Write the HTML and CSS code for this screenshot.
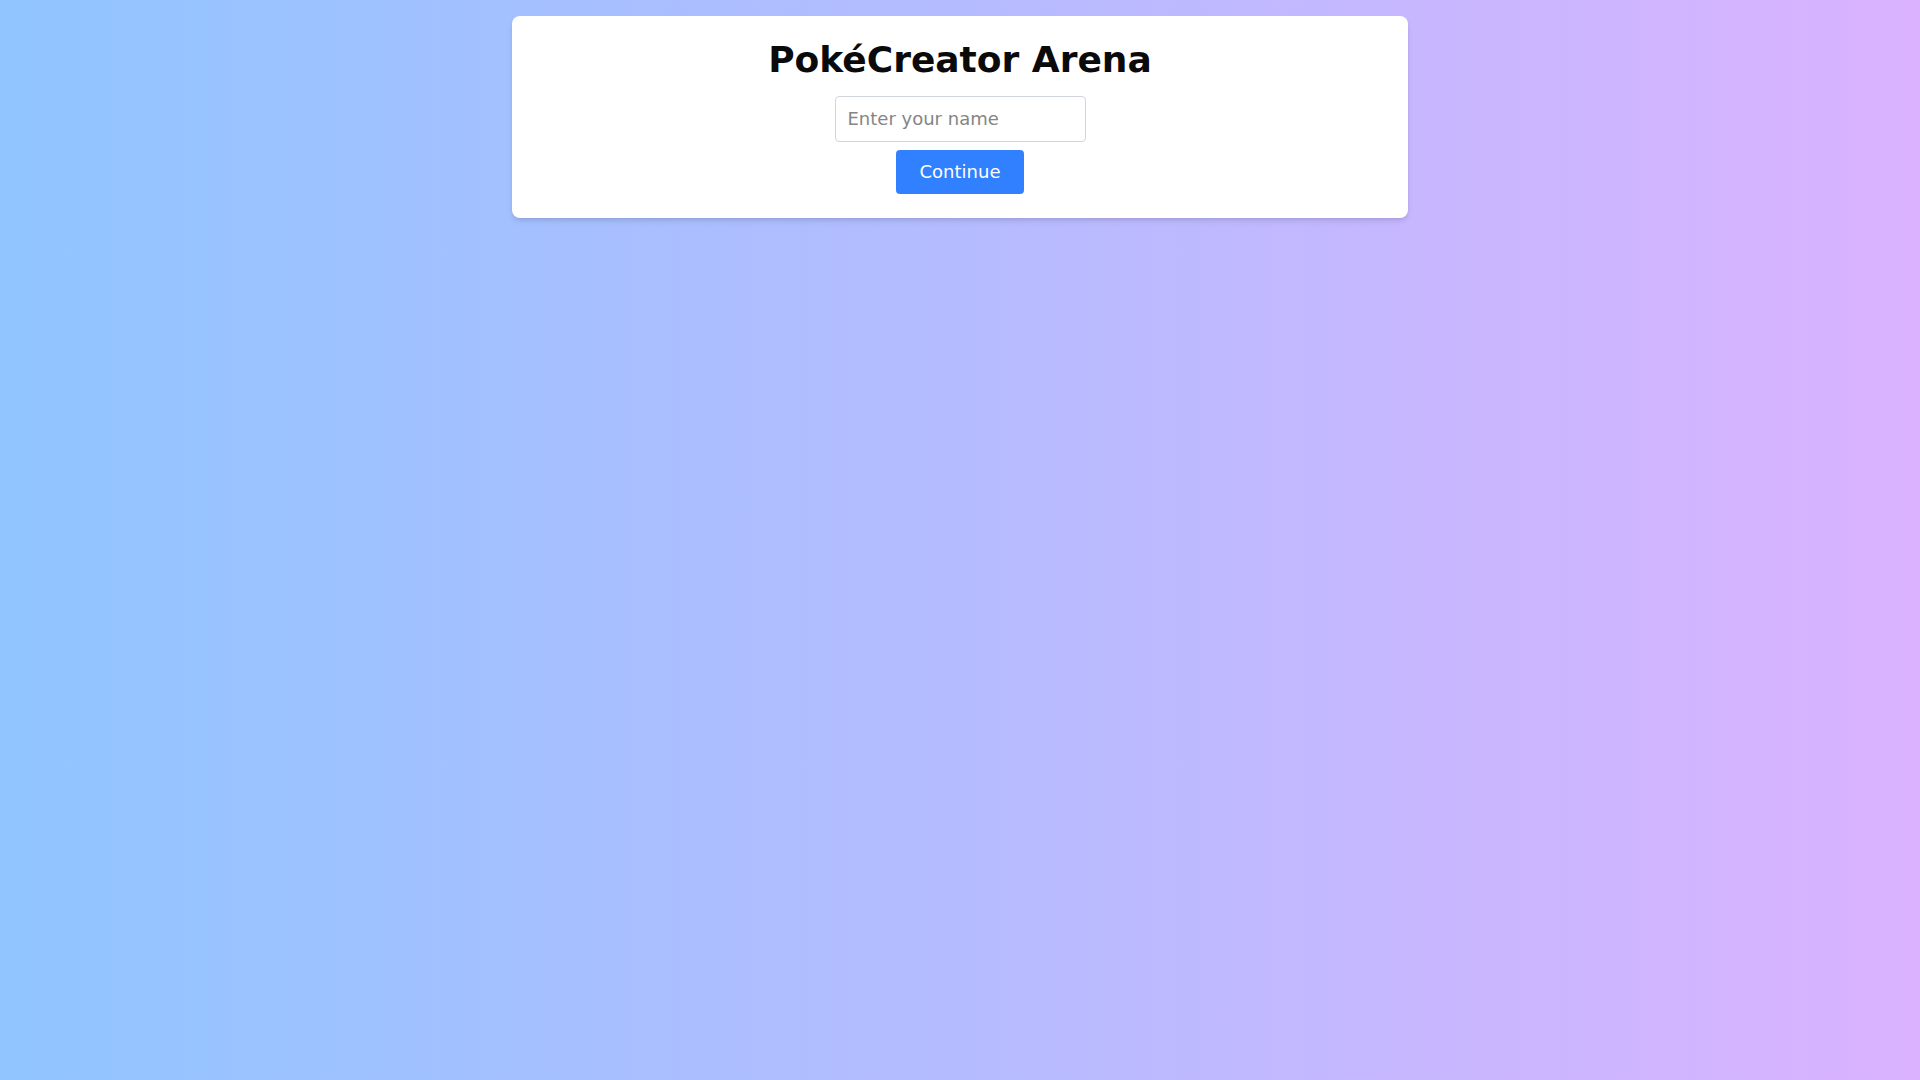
FILE: index.html
```html
<!DOCTYPE html>
<html>
<head>
  <title>PokéCreator Arena</title>
  <link rel="stylesheet" href="styles.css">
</head>
<body>
  <div class="card">
    <h1>PokéCreator Arena</h1>
    <form class="name-form">
      <input type="text" id="name-input" placeholder="Enter your name">
      <button type="submit">Continue</button>
    </form>
  </div>
</body>
</html>
```

FILE: styles.css
```css
html, body {
  margin: 0;
  padding: 0;
}
body {
  font-family: "DejaVu Sans", sans-serif;
  min-height: 100vh;
  background: linear-gradient(to right, #90c5ff, #dab2ff);
  padding-top: 16px;
  box-sizing: border-box;
}
.card {
  max-width: 896px;
  margin: 0 auto;
  padding: 24px;
  box-sizing: border-box;
  background: white;
  border-radius: 8px;
  box-shadow: 0 4px 6px -1px rgba(0,0,0,0.1), 0 2px 4px -2px rgba(0,0,0,0.1);
  text-align: center;
}
.card h1 {
  margin: 0 0 16px 0;
  font-size: 36px;
  line-height: 40px;
  font-weight: bold;
  color: #0a0a0a;
}
.name-form {
  display: flex;
  flex-direction: column;
  align-items: center;
  gap: 8px;
}
input[type="text"] {
  width: 251px;
  box-sizing: border-box;
  padding: 8px 12px;
  font-family: inherit;
  font-size: 18px;
  line-height: 28px;
  border: 1px solid #d1d5dc;
  border-radius: 4px;
  color: #0a0a0a;
  outline: none;
}
input::placeholder {
  color: #858585;
}
button {
  background: #3080ff;
  color: white;
  border: none;
  padding: 8px 24px;
  border-radius: 4px;
  font-family: inherit;
  font-size: 18px;
  line-height: 28px;
  cursor: pointer;
}
button:hover {
  background: #155dfc;
}
```
